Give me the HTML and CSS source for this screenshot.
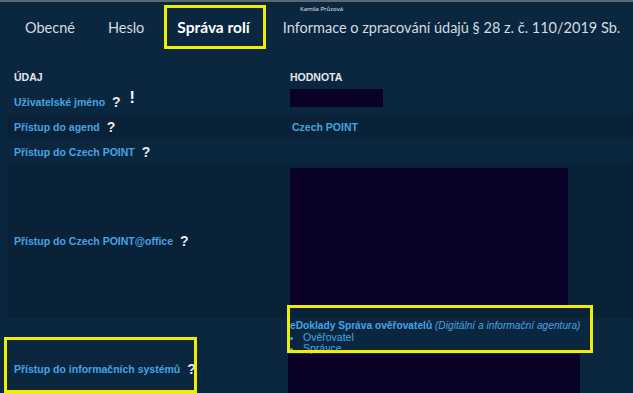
FILE: index.html
```html
<!DOCTYPE html>
<html lang="cs">
<head>
<meta charset="utf-8">
<title>Správa rolí</title>
<link rel="stylesheet" href="styles.css">
</head>
<body>
<div class="page">
  <div class="user">Kamila Průzová</div>
  <nav class="tabs">
    <span class="tab">Obecné</span>
    <span class="tab tab-heslo">Heslo</span>
    <span class="tab active">Správa rolí</span>
    <span class="tab">Informace o zpracování údajů § 28 z. č. 110/2019 Sb.</span>
  </nav>
  <div class="table">
    <div class="row head">
      <div class="c1">ÚDAJ</div>
      <div class="c2">HODNOTA</div>
    </div>
    <div class="row r1">
      <div class="c1"><span class="lbl">Uživatelské jméno</span><span class="q">?</span><span class="ex">!</span></div>
      <div class="c2 top"><div class="redact redact-name"></div></div>
    </div>
    <div class="row dark r2">
      <div class="c1"><span class="lbl">Přístup do agend</span><span class="q">?</span></div>
      <div class="c2"><span class="val">Czech POINT</span></div>
    </div>
    <div class="row r3">
      <div class="c1"><span class="lbl">Přístup do Czech POINT</span><span class="q">?</span></div>
      <div class="c2"></div>
    </div>
    <div class="row dark r4">
      <div class="c1"><span class="lbl">Přístup do Czech POINT@office</span><span class="q">?</span></div>
      <div class="c2 top"><div class="redact redact-office"></div></div>
    </div>
    <div class="row r5">
      <div class="c1"><span class="lbl">Přístup do informačních systémů</span><span class="q">?</span></div>
      <div class="c2 top">
        <div class="sys"><b>eDoklady Správa ověřovatelů</b> <i>(Digitální a informační agentura)</i></div>
        <ul class="roles">
          <li>Ověřovatel</li>
          <li>Správce</li>
        </ul>
        <div class="redact redact-sys"></div>
      </div>
    </div>
  </div>
  <div class="mark mark-sys"></div>
  <div class="mark mark-label"></div>
</div>
</body>
</html>
```

FILE: styles.css
```css
html, body {
  margin: 0;
  padding: 0;
  background: #0b2740;
  overflow: hidden;
}
.page {
  position: relative;
  width: 633px;
  height: 393px;
  overflow: hidden;
  border-top: 2px solid #5d6875;
  box-sizing: border-box;
  background: #0b2740;
  font-family: "Liberation Sans", Arial, sans-serif;
}
.user {
  position: absolute;
  left: 300px;
  top: 3px;
  font-size: 6px;
  color: #e6e9ee;
  font-family: "Open Sans", sans-serif;
  white-space: nowrap;
}
.tabs {
  display: flex;
  align-items: center;
  height: 44px;
  margin-top: 3px;
  padding-left: 25px;
  column-gap: 17px;
  font-family: Lato, "Noto Sans", sans-serif;
  font-size: 14.5px;
  color: #d5dbe2;
  white-space: nowrap;
}
.tab { flex-shrink: 0; }
.tab-heslo { margin-left: 16px; }
.tab.active {
  align-self: stretch;
  display: flex;
  align-items: center;
  border: 3px solid #f2ec00;
  padding: 0 13px 0 10px;
  margin-left: 3px;
  font-size: 15.5px;
  font-weight: 700;
  color: #ffffff;
}
.table {
  margin-top: 15px;
  margin-left: 8px;
}
.row {
  display: flex;
  align-items: center;
}
.row.dark { background: #0a2237; }
.c1 {
  width: 282px;
  padding-left: 6px;
  box-sizing: border-box;
  display: flex;
  align-items: center;
}
.c2 {
  flex: 1;
  align-self: stretch;
  display: flex;
  align-items: center;
}
.c2.top { align-items: flex-start; flex-direction: column; }
.head { height: 25px; color: #e4e7ea; font-weight: 700; font-size: 10.5px; }
.r1 { height: 26px; }
.r2 { height: 24px; }
.r3 { height: 25px; }
.r4 { height: 154px; }
.r5 { height: 102px; align-items: flex-start; }
.r5 .c1 { margin-top: 43px; }
.lbl {
  color: #46a3e2;
  font-weight: 700;
  font-size: 10.5px;
}
.val {
  color: #46a3e2;
  font-weight: 700;
  font-size: 10.5px;
  padding-left: 2px;
}
.q {
  color: #e8ebee;
  font-weight: 700;
  font-size: 14px;
  margin-left: 7px;
}
.ex {
  color: #ffffff;
  font-weight: 900;
  font-size: 16px;
  margin-left: 9px;
  margin-top: -8px;
}
.redact { background: #0a0128; }
.redact-name { width: 93px; height: 18px; }
.redact-office { width: 278px; height: 139px; margin-top: 4px; }
.redact-sys { width: 292px; height: 60px; margin-left: -2px; }
.sys {
  margin-top: 2px;
  font-size: 10.2px;
  line-height: 12px;
  color: #46a3e2;
  white-space: nowrap;
}
.sys i { font-weight: 400; }
.roles {
  margin: 0;
  padding: 0 0 0 13px;
  font-size: 10.5px;
  line-height: 11px;
  color: #46a3e2;
  list-style: disc;
}
.mark {
  position: absolute;
  border: 3px solid #f2ec00;
  box-sizing: border-box;
}
.mark-sys { left: 287px; top: 303px; width: 306px; height: 48px; }
.mark-label { left: 4px; top: 335px; width: 193px; height: 56px; }
```
